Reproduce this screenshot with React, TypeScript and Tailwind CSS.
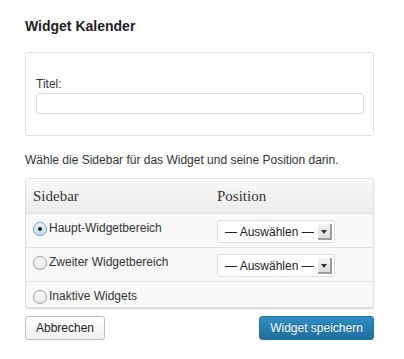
import { useState } from "react";

const rows = [
  { id: "main", label: "Haupt-Widgetbereich", select: true },
  { id: "second", label: "Zweiter Widgetbereich", select: true },
  { id: "inactive", label: "Inaktive Widgets", select: false },
];

function Radio({ checked }: { checked: boolean }) {
  return (
    <span
      className={
        "flex h-[14px] w-[14px] shrink-0 items-center justify-center rounded-full border " +
        (checked
          ? "border-[#7a9cc4] bg-gradient-to-b from-[#eaf3fc] to-[#c3dcf5]"
          : "border-[#9a9a9a] bg-gradient-to-b from-white to-[#e8e8e8]")
      }
    >
      {checked && <span className="h-[4px] w-[4px] rounded-full bg-[#222]" />}
    </span>
  );
}

function PositionSelect() {
  return (
    <div className="flex h-[23px] w-[118px] items-center justify-between rounded-[3px] border border-[#dcdcdc] bg-white pl-[7px] pr-[2px]">
      <span className="whitespace-nowrap text-[12px] text-[#222]">— Auswählen —</span>
      <span className="flex h-[16px] w-[14px] items-center justify-center border-r-2 border-b-2 border-[#9c9c9c] bg-gradient-to-b from-[#f4f4f4] to-[#dedede]">
        <span className="mt-[2px] h-0 w-0 border-x-[3px] border-t-[4px] border-x-transparent border-t-[#333]" />
      </span>
    </div>
  );
}

export default function App() {
  const [sidebar, setSidebar] = useState("main");

  return (
    <div className="h-[359px] w-[404px] bg-white pl-[25px] pr-[30px] pt-[18px] font-['Liberation_Sans',Arial,sans-serif] text-[#333]">
      <h3 className="text-[14px] font-bold leading-[17px] text-[#222]">Widget Kalender</h3>

      <div className="mt-[17px] h-[84px] rounded-[3px] border border-[#e0e0e0] bg-white px-[10px] pt-[24px]">
        <label className="block text-[12px] leading-[14px] text-[#333]">Titel:</label>
        <div className="mt-[2px] h-[21px] w-[328px] rounded-[3px] border border-[#dddddd] bg-white" />
      </div>

      <p className="mt-[16px] text-[12px] leading-[16px] text-[#333]">
        Wähle die Sidebar für das Widget und seine Position darin.
      </p>

      <div className="mt-[10px] overflow-hidden rounded-[3px] border border-[#e1e1e1] bg-[#f9f9f9] shadow-[0_1px_1px_#d4d4d4]">
        <div className="flex h-[35px] items-center border-b border-[#e1e1e1] bg-gradient-to-b from-[#f9f9f9] to-[#ececec] font-['Liberation_Serif',Georgia,serif] text-[15px] text-[#333]">
          <span className="w-[191px] pl-[7px]">Sidebar</span>
          <span>Position</span>
        </div>
        {rows.map((r, i) => (
          <div
            key={r.id}
            className={
              "flex items-start " +
              (i < rows.length - 1 ? "h-[34px] border-b border-[#e1e1e1]" : "h-[25px]")
            }
          >
            <label
              className="flex w-[191px] cursor-pointer items-center gap-[2px] pl-[7px] pt-[7px] text-[12px] leading-[15px] text-[#333]"
              onClick={() => setSidebar(r.id)}
            >
              <Radio checked={sidebar === r.id} />
              {r.label}
            </label>
            {r.select && (
              <div className="pt-[6px]">
                <PositionSelect />
              </div>
            )}
          </div>
        ))}
      </div>

      <div className="mt-[8px] flex items-center justify-between">
        <button className="h-[24px] w-[80px] rounded-[3px] border border-[#bdbdbd] bg-gradient-to-b from-white to-[#f0f0f0] text-[12px] text-[#222]">
          Abbrechen
        </button>
        <button className="h-[24px] w-[115px] rounded-[3px] border border-[#21759b] bg-gradient-to-b from-[#2e8ec5] to-[#1f6f9d] text-[12px] text-white [text-shadow:0_-1px_0_rgba(0,0,0,0.3)]">
          Widget speichern
        </button>
      </div>
    </div>
  );
}
